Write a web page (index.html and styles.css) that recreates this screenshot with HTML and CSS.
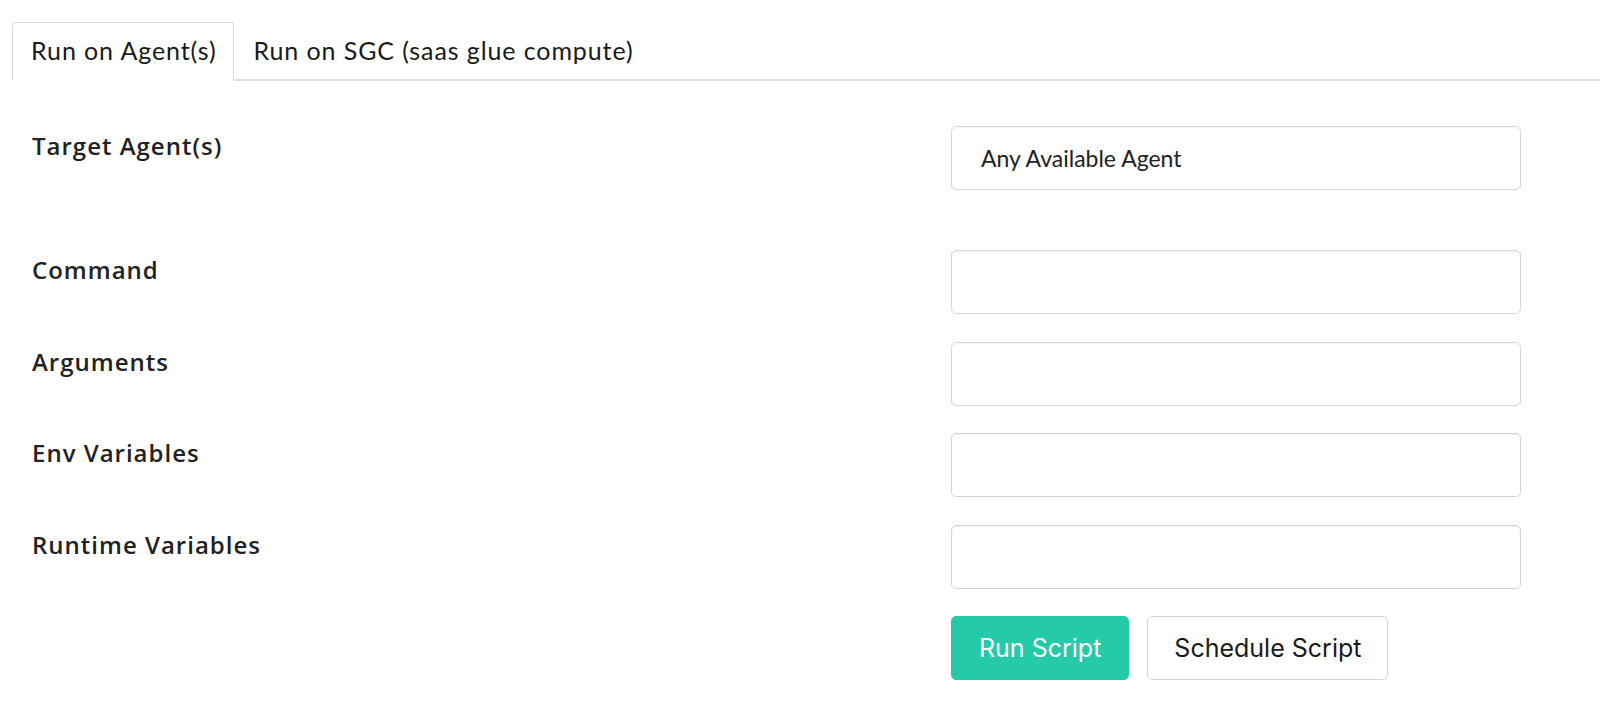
FILE: index.html
```html
<!DOCTYPE html>
<html>
<head>
<meta charset="utf-8">
<link rel="stylesheet" href="styles.css">
</head>
<body>
<div class="page">
  <div class="tabs">
    <div class="tab active">Run on Agent(s)</div>
    <div class="tab">Run on SGC (saas glue compute)</div>
    <div class="tab-fill"></div>
  </div>
  <div class="form">
    <div class="field first">
      <div class="label">Target Agent(s)</div>
      <div class="control"><div class="input">Any Available Agent</div></div>
    </div>
    <div class="field">
      <div class="label">Command</div>
      <div class="control"><div class="input"></div></div>
    </div>
    <div class="field">
      <div class="label">Arguments</div>
      <div class="control"><div class="input"></div></div>
    </div>
    <div class="field">
      <div class="label">Env Variables</div>
      <div class="control"><div class="input"></div></div>
    </div>
    <div class="field">
      <div class="label">Runtime Variables</div>
      <div class="control"><div class="input"></div></div>
    </div>
    <div class="field">
      <div class="label"></div>
      <div class="control buttons">
        <button class="btn primary">Run Script</button>
        <button class="btn">Schedule Script</button>
      </div>
    </div>
  </div>
</div>
</body>
</html>
```
FILE: styles.css
```css
html, body {
  margin: 0;
  padding: 0;
  background: #ffffff;
}
body {
  font-family: "Lato", "Open Sans", sans-serif;
  color: #222222;
}
.page {
  padding-top: 22px;
}
.tabs {
  display: flex;
  align-items: flex-end;
  padding-left: 12px;
}
.tab {
  height: 59px;
  box-sizing: border-box;
  padding: 0 18px 2px;
  display: flex;
  align-items: center;
  white-space: nowrap;
  font-size: 25px;
  letter-spacing: 0.9px;
  color: #1a1a1a;
  border: 1px solid transparent;
  border-bottom: 2px solid #e0e0e0;
  border-radius: 4px 4px 0 0;
}
.tab.active {
  border: 1px solid #dcdcdc;
  border-bottom: 2px solid #ffffff;
  padding-right: 17px;
}
.tab-fill {
  flex: 1;
  border-bottom: 2px solid #e0e0e0;
}
.form {
  padding: 45px 79px 0 32px;
}
.field {
  display: flex;
  margin-bottom: 27.5px;
}
.field.first {
  margin-bottom: 60px;
}
.label {
  flex: 1;
  font-family: "Open Sans", "Lato", sans-serif;
  font-weight: 600;
  font-size: 24px;
  letter-spacing: 1px;
  padding-top: 3px;
  white-space: nowrap;
  color: #222222;
}
.control {
  width: 570px;
}
.input {
  height: 64px;
  box-sizing: border-box;
  border: 1px solid #d6d6d6;
  border-radius: 5px;
  box-shadow: inset 0 1px 2px rgba(10,10,10,0.06);
  padding: 0 29px;
  display: flex;
  align-items: center;
  font-size: 23px;
  color: #222222;
}
.buttons {
  display: flex;
  gap: 18px;
}
.btn {
  height: 64px;
  box-sizing: border-box;
  border: 1px solid #d6d6d6;
  border-radius: 5px;
  background: #ffffff;
  font-family: "Inter", "Roboto", sans-serif;
  font-size: 25px;
  white-space: nowrap;
  color: #1a1a1a;
  padding: 0 26px;
}
.btn.primary {
  background: #25cba8;
  border-color: #25cba8;
  color: #ffffff;
  padding: 0 27px;
}
```
